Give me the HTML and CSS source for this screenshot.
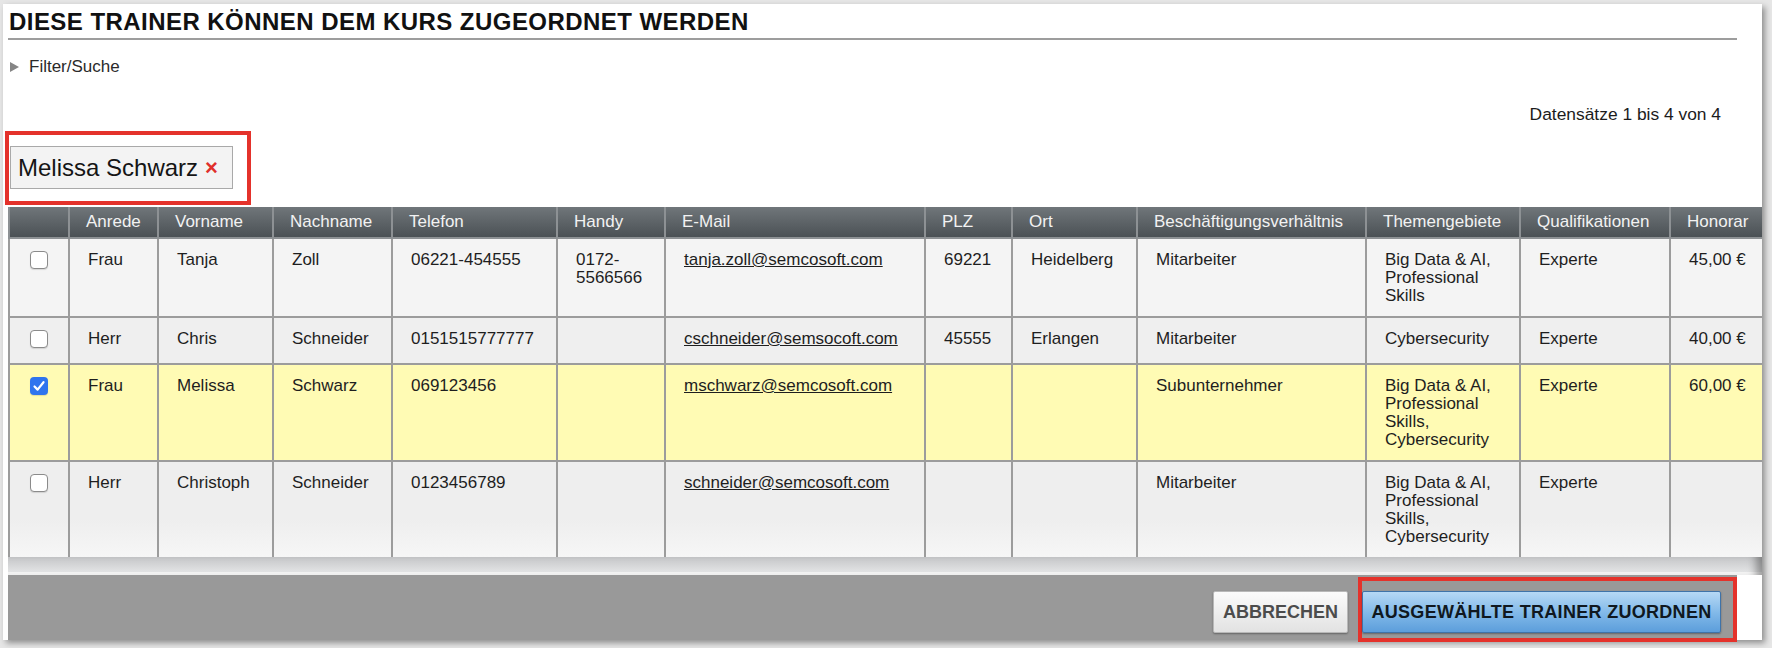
FILE: index.html
```html
<!DOCTYPE html>
<html lang="de">
<head>
<meta charset="utf-8">
<title>Trainer zuordnen</title>
<link rel="stylesheet" href="styles.css">
</head>
<body>
<div class="frame">
  <h1 class="title">DIESE TRAINER KÖNNEN DEM KURS ZUGEORDNET WERDEN</h1>
  <div class="filter"><span class="tri"></span>Filter/Suche</div>
  <div class="count">Datensätze 1 bis 4 von 4</div>
  <div class="chips">
    <div class="mark chipmark">
      <span class="chip">Melissa Schwarz<span class="x">×</span></span>
    </div>
  </div>
  <div class="tablewrap">
    <table class="grid">
      <colgroup>
        <col class="c-cb"><col class="c-an"><col class="c-vn"><col class="c-nn"><col class="c-tel"><col class="c-hd"><col class="c-em"><col class="c-plz"><col class="c-ort"><col class="c-bv"><col class="c-tg"><col class="c-ql"><col class="c-hn">
      </colgroup>
      <thead>
        <tr>
          <th></th><th>Anrede</th><th>Vorname</th><th>Nachname</th><th>Telefon</th><th>Handy</th><th>E-Mail</th><th>PLZ</th><th>Ort</th><th>Beschäftigungsverhältnis</th><th>Themengebiete</th><th>Qualifikationen</th><th>Honorar</th>
        </tr>
      </thead>
      <tbody>
        <tr class="r1">
          <td class="cbc"><span class="cb"></span></td><td>Frau</td><td>Tanja</td><td>Zoll</td><td>06221-454555</td><td>0172-5566566</td><td><a href="#">tanja.zoll@semcosoft.com</a></td><td>69221</td><td>Heidelberg</td><td>Mitarbeiter</td><td>Big Data &amp; AI, Professional Skills</td><td>Experte</td><td>45,00 €</td>
        </tr>
        <tr class="r2">
          <td class="cbc"><span class="cb"></span></td><td>Herr</td><td>Chris</td><td>Schneider</td><td>0151515777777</td><td></td><td><a href="#">cschneider@semsocoft.com</a></td><td>45555</td><td>Erlangen</td><td>Mitarbeiter</td><td>Cybersecurity</td><td>Experte</td><td>40,00 €</td>
        </tr>
        <tr class="r3 sel">
          <td class="cbc"><span class="cb on"><svg viewBox="0 0 18 18" width="18" height="18"><path d="M4.5 9.5 L7.6 12.6 L13.5 5.2" fill="none" stroke="#fff" stroke-width="2.2" stroke-linecap="round" stroke-linejoin="round"/></svg></span></td><td>Frau</td><td>Melissa</td><td>Schwarz</td><td>069123456</td><td></td><td><a href="#">mschwarz@semcosoft.com</a></td><td></td><td></td><td>Subunternehmer</td><td>Big Data &amp; AI, Professional Skills, Cybersecurity</td><td>Experte</td><td>60,00 €</td>
        </tr>
        <tr class="r4">
          <td class="cbc"><span class="cb"></span></td><td>Herr</td><td>Christoph</td><td>Schneider</td><td>0123456789</td><td></td><td><a href="#">schneider@semcosoft.com</a></td><td></td><td></td><td>Mitarbeiter</td><td>Big Data &amp; AI, Professional Skills, Cybersecurity</td><td>Experte</td><td></td>
        </tr>
      </tbody>
    </table>
  </div>
  <div class="hscroll"></div>
  <div class="footer">
    <button class="btn btn-cancel" type="button">ABBRECHEN</button>
    <div class="mark btnmark">
      <button class="btn btn-primary" type="button">AUSGEWÄHLTE TRAINER ZUORDNEN</button>
    </div>
  </div>
</div>
</body>
</html>
```
FILE: styles.css
```css
* { box-sizing: border-box; }
html, body { margin: 0; padding: 0; }
body {
  background: #e6e6e6;
  font-family: "Liberation Sans", Arial, Helvetica, sans-serif;
  color: #1c1c1c;
  width: 1772px;
  height: 648px;
  overflow: hidden;
}
.frame {
  margin: 4px 10px 0 3px;
  width: 1759px;
  height: 636px;
  background: #fff;
  padding: 5px 25px 0 5px;
  box-shadow: 3px 3px 6px rgba(0,0,0,0.38);
  position: relative;
}
.title {
  margin: 0;
  padding: 0 0 3px 1px;
  font-size: 24px;
  line-height: 26px;
  letter-spacing: 0.45px;
  font-weight: bold;
  color: #111;
  border-bottom: 2px solid #9d9d9d;
}
.filter {
  margin-top: 17px;
  height: 20px;
  display: flex;
  align-items: center;
  font-size: 17px;
  line-height: 20px;
  color: #2a2a2a;
}
.tri {
  width: 0; height: 0;
  border-top: 5.5px solid transparent;
  border-bottom: 5.5px solid transparent;
  border-left: 9px solid #858585;
  margin: 0 10px 0 2px;
}
.count {
  margin-top: 27px;
  text-align: right;
  padding-right: 16px;
  font-size: 17.4px;
  line-height: 20px;
  color: #1c1c1c;
}
.chips { margin-top: 7px; height: 74px; }
.mark { border: 4px solid #e4322b; }
.chipmark {
  display: inline-block;
  margin-left: -3px;
  padding: 11px 14px 12px 1px;
}
.chip {
  display: flex;
  align-items: center;
  width: 223px;
  height: 43px;
  padding: 0 0 0 7px;
  background: #f3f3f3;
  border: 1px solid #a9a9a9;
  font-size: 24px;
  color: #151515;
  white-space: nowrap;
}
.x {
  color: #e0302a;
  font-weight: bold;
  font-size: 22px;
  margin-left: 7px;
}
.tablewrap {
  margin-top: 2px;
  margin-right: -25px;
  height: 350px;
  overflow: hidden;
}
.grid {
  border-collapse: collapse;
  table-layout: fixed;
  width: 1771px;
  font-size: 17px;
  line-height: 18px;
}
.c-cb { width: 60px; } .c-an { width: 89px; } .c-vn { width: 115px; } .c-nn { width: 119px; }
.c-tel { width: 165px; } .c-hd { width: 108px; } .c-em { width: 260px; } .c-plz { width: 87px; }
.c-ort { width: 125px; } .c-bv { width: 229px; } .c-tg { width: 154px; } .c-ql { width: 150px; }
.c-hn { width: 110px; }
.grid th {
  height: 31px;
  padding: 0 6px 0 16px;
  text-align: left;
  font-weight: normal;
  color: #f2f2f2;
  background: linear-gradient(#70767a, #4b5155);
  border: 2px solid #8d9194;
  border-top: 0;
  white-space: nowrap;
  overflow: hidden;
}
.grid td {
  vertical-align: top;
  padding: 12px 8px 11px 18px;
  border: 2px solid #9c9c9c;
  color: #1e1e1e;
}
.grid td a { color: #1e1e1e; text-decoration: underline; }
.grid td.cbc { padding: 12px 0 0 0; text-align: center; }
.r1 td { background: #f4f4f4; }
.r2 { height: 47px; }
.r2 td { background: #efefef; }
.sel td { background: #fffbb4; }
.r4 td { background: linear-gradient(#eeeeee 60%, #f6f6f6); }
.cb {
  display: inline-block;
  vertical-align: top;
  width: 18px; height: 18px;
  border: 1.5px solid #8b8b8b;
  border-radius: 4px;
  background: #fff;
  box-shadow: 0 1px 1px rgba(0,0,0,0.12);
}
.cb.on {
  border: 0;
  background: #2f74ee;
}
.cb svg { display: block; }
.hscroll {
  margin-right: -25px;
  height: 18px;
  background: linear-gradient(#c5c6c8, #e3e4e5 85%, #f3f3f3 86%);
  box-shadow: inset -12px 0 8px -6px rgba(0,0,0,0.35);
}
.footer {
  height: 65px;
  background: #999999;
  padding-top: 2px;
  display: flex;
  justify-content: flex-end;
  align-items: flex-start;
  gap: 10px;
}
.btn {
  font-family: "Liberation Sans", Arial, Helvetica, sans-serif;
  font-weight: bold;
  font-size: 18px;
  height: 42px;
  border-radius: 2px;
  cursor: pointer;
  white-space: nowrap;
}
.btn-cancel {
  margin-top: 14px;
  width: 135px;
  padding: 0;
  color: #4c4c4c;
  background: linear-gradient(#fbfbfb, #e2e2e2);
  border: 1px solid #b8b8b8;
  box-shadow: 0 1px 2px rgba(0,0,0,0.35);
}
.btnmark {
  height: 65px;
  padding: 10px 12px 0 0;
}
.btn-primary {
  width: 359px;
  padding: 0;
  letter-spacing: 0.3px;
  color: #101820;
  background: linear-gradient(#b6d8f5, #7fb7e8 55%, #5c9edb);
  border: 1px solid #3f73a8;
  box-shadow: 0 1px 2px rgba(0,0,0,0.35);
}
```
